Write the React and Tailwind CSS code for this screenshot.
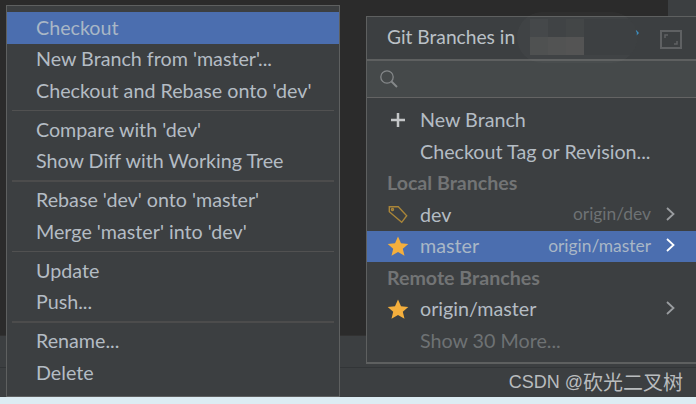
function Row({ children, active }) {
  return (
    <div className={`h-[31.5px] flex items-center pl-[29px] pb-[0.5px] text-[19.7px] whitespace-nowrap ${active ? "bg-[#4b6eaf] text-[#a9b7c6]" : "text-[#b4bcc4]"}`}>
      {children}
    </div>
  );
}
function Sep({ thick }) {
  return (
    <div className="h-[7.5px] flex items-center px-[5px]">
      <div className={`w-full ${thick ? "h-[2px] bg-[#4c4c4c]" : "h-px bg-[#515151]"}`} />
    </div>
  );
}
function Star() {
  return (
    <svg width="22" height="20" viewBox="0 0 22 20" className="shrink-0">
      <path d="M11 0.5 L14 7.2 L21.3 7.9 L15.8 12.7 L17.5 19.8 L11 16.1 L4.5 19.8 L6.2 12.7 L0.7 7.9 L8 7.2 Z" fill="#f4af3d" />
    </svg>
  );
}
function Tag() {
  return (
    <svg width="21" height="18" viewBox="0 0 21 18" fill="none" stroke="#a98539" strokeWidth="1.4" className="shrink-0">
      <path d="M2.3 0.7 H11.3 L19.7 9.7 L14.7 16.3 L2.3 5.7 Z" />
      <circle cx="5.5" cy="3.5" r="1" />
    </svg>
  );
}
function Chevron({ color }) {
  return (
    <svg width="9" height="14" viewBox="0 0 9 14" fill="none" stroke={color} strokeWidth="1.8" className="shrink-0">
      <path d="M1 1 L7.5 7 L1 13" />
    </svg>
  );
}
function BranchRow({ icon, name, origin, active, dim }) {
  return (
    <div className={`h-[31.5px] flex items-center text-[19.7px] whitespace-nowrap ${active ? "bg-[#4b6eaf]" : ""}`}>
      <div className="w-[53px] pl-[20px] flex items-center shrink-0">{icon}</div>
      <span className={`pb-[0.5px] ${dim ? "text-[#6e7274]" : active ? "text-[#a9b7c6]" : "text-[#b4bcc4]"}`}>{name}</span>
      <span className={`ml-auto pb-[1px] text-[17.4px] ${active ? "text-[#a9b7c6]" : "text-[#6e7274]"}`}>{origin}</span>
      {origin !== undefined ? (
        <div className="w-[45px] flex justify-center shrink-0 pr-[6px] pb-[2px]">
          <Chevron color={active ? "#ffffff" : "#9a9da0"} />
        </div>
      ) : null}
    </div>
  );
}
function Heading({ children }) {
  return (
    <div className="h-[31.5px] flex items-center pl-[20px] pb-[1px] text-[19.6px] font-bold text-[#727475] whitespace-nowrap">
      {children}
    </div>
  );
}
export default function App() {
  return (
    <div className="relative w-[696px] h-[404px] overflow-hidden bg-[#2b2b2b] font-['Lato','Noto_Sans_CJK_SC',sans-serif]">
      <div className="flex flex-col h-full">
        <div className="flex-1 flex justify-end">
          <div className="w-[28px] h-[16px] bg-[#3c3f41]" />
        </div>
        <div className="h-[32px] bg-[#3c3f41] border-t border-[#323232]" />
        <div className="h-[30px] bg-[#3c3f41] border-t border-[#323537] flex items-center justify-end pr-[13px] text-[#b9bcbe] text-[18px] font-['Liberation_Sans','Noto_Sans_CJK_SC',sans-serif] whitespace-nowrap">
          CSDN @<span className="text-[20px]">砍光二叉树</span>
        </div>
        <div className="h-[7px] bg-[#dcecf3]" />
      </div>

      <div className="absolute left-[6px] top-[5px] w-[334px] h-[392px] bg-[#3c3f41] border border-[#5e6060] pt-[6px]">
        <Row active>Checkout</Row>
        <Row>New Branch from 'master'...</Row>
        <Row>Checkout and Rebase onto 'dev'</Row>
        <Sep />
        <Row>Compare with 'dev'</Row>
        <Row>Show Diff with Working Tree</Row>
        <Sep thick />
        <Row>Rebase 'dev' onto 'master'</Row>
        <Row>Merge 'master' into 'dev'</Row>
        <Sep />
        <Row>Update</Row>
        <Row>Push...</Row>
        <Sep thick />
        <Row>Rename...</Row>
        <Row>Delete</Row>
      </div>

      <div className="absolute left-[366px] top-[16px] w-[330px] h-[348px] bg-[#3c3f41] border-l border-t border-b-2 border-[#5e6060] flex flex-col">
        <div className="relative h-[44px] shrink-0 flex items-center pl-[20px] pb-[1px] text-[19.2px] text-[#bbc1c7] border-b-2 border-[#5e6060] whitespace-nowrap">
          Git Branches in
          <svg width="22" height="19" viewBox="0 0 22 19" fill="none" className="absolute right-[14px] top-[13px]">
            <rect x="1" y="1" width="20" height="17" stroke="#5f6163" strokeWidth="2" />
            <path d="M5 8 V5 H8 M17 11 V14 H14" stroke="#5f6163" strokeWidth="1.5" />
          </svg>
          <svg width="4" height="6" viewBox="0 0 4 6" fill="none" className="absolute left-[268px] top-[13px]">
            <path d="M0.5 0.5 L3 3 L0.5 5.5" stroke="#3d8fc0" strokeWidth="1.5" />
          </svg>
        </div>
        <div className="h-[37px] shrink-0 flex items-center pl-[13px] bg-[#45494a] border-b border-[#646464]">
          <svg width="18" height="18" viewBox="0 0 18 18" fill="none" stroke="#85888a" strokeWidth="1.3">
            <circle cx="7" cy="7" r="6.2" />
            <path d="M11.5 11.5 L17 17" strokeWidth="2" />
          </svg>
        </div>
        <div className="pt-[6.5px]">
          <BranchRow
            icon={
              <svg width="18" height="18" viewBox="0 0 18 18" className="ml-[2px]" stroke="#c4c6c8" strokeWidth="2.5">
                <path d="M9 2 V16 M2 9 H16" />
              </svg>
            }
            name="New Branch"
          />
          <BranchRow name="Checkout Tag or Revision..." />
          <Heading>Local Branches</Heading>
          <BranchRow icon={<Tag />} name="dev" origin="origin/dev" />
          <BranchRow icon={<Star />} name="master" origin="origin/master" active />
          <Heading>Remote Branches</Heading>
          <BranchRow icon={<Star />} name="origin/master" origin="" />
          <BranchRow name="Show 30 More..." dim />
        </div>
      </div>

      <div className="absolute left-[517px] top-[12px] w-[120px] h-[51px] rounded-[36px] overflow-hidden bg-white/[0.025] pl-[13px] pt-[7px]">
        <div className="grid grid-cols-[18px_18px_18px_36px_18px_18px] grid-rows-[18px_18px]">
          <div className="bg-[#45484a]" />
          <div className="bg-[#404345]" />
          <div className="bg-[#434647]" />
          <div className="bg-[#3d4042]" />
          <div className="bg-[#3d4042]" />
          <div className="bg-[#3b4b58]" />
          <div className="bg-[#4f5151]" />
          <div className="bg-[#525353]" />
          <div className="bg-[#545454]" />
          <div className="bg-[#3d4042]" />
          <div className="bg-[#3d4042]" />
          <div className="bg-[#3a4d5c]" />
        </div>
      </div>
    </div>
  );
}
